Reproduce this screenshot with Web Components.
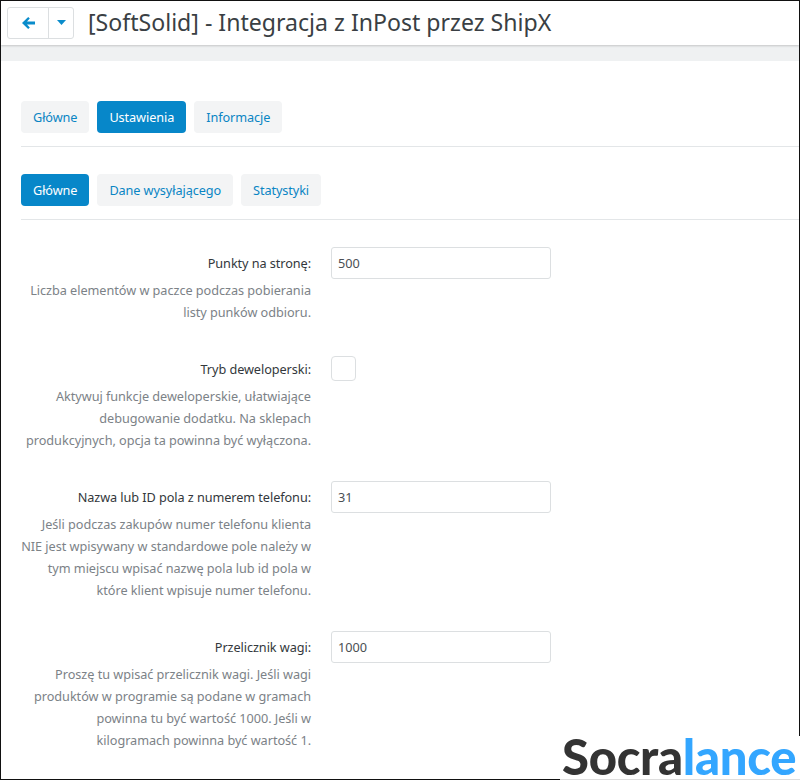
<!DOCTYPE html>
<html lang="en">
    <head>
        <meta charset="UTF-8" />
        <title>Integracja z InPost</title>
        <style>
            html, body {
                margin: 0;
                background: #fff;
            }
            body {
                font-family: 'Noto Sans', 'Open Sans', sans-serif;
                height: 780px;
                overflow: hidden;
                box-sizing: border-box;
                border: 1px solid #111;
            }
        </style>
    </head>
    <body>
        <app-header title-text="[SoftSolid] - Integracja z InPost przez ShipX"></app-header>
        <tab-bar class="first" items="Główne|Ustawienia|Informacje" active="1"></tab-bar>
        <tab-bar class="second" items="Główne|Dane wysyłającego|Statystyki" active="0"></tab-bar>
        <settings-form>
            <form-row label="Punkty na stronę:" value="500">
                Liczba elementów w paczce podczas pobierania<br />listy punków odbioru.
            </form-row>
            <form-row label="Tryb deweloperski:" type="checkbox">
                Aktywuj funkcje deweloperskie, ułatwiające<br />debugowanie dodatku. Na sklepach<br />produkcyjnych, opcja ta powinna być wyłączona.
            </form-row>
            <form-row label="Nazwa lub ID pola z numerem telefonu:" value="31">
                Jeśli podczas zakupów numer telefonu klienta<br />NIE jest wpisywany w standardowe pole należy w<br />tym miejscu wpisać nazwę pola lub id pola w<br />które klient wpisuje numer telefonu.
            </form-row>
            <form-row label="Przelicznik wagi:" value="1000">
                Proszę tu wpisać przelicznik wagi. Jeśli wagi<br />produktów w programie są podane w gramach<br />powinna tu być wartość 1000. Jeśli w<br />kilogramach powinna być wartość 1.
            </form-row>
        </settings-form>
        <brand-mark></brand-mark>

        <template id="header-template">
            <style>
                :host {
                    display: block;
                }
                .bar {
                    display: flex;
                    align-items: center;
                    gap: 14px;
                    height: 44px;
                    padding-left: 6px;
                    box-shadow: 0 1px 2px rgba(0, 0, 0, 0.18);
                    position: relative;
                }
                .btns {
                    display: flex;
                    width: 67px;
                    height: 32px;
                    box-sizing: border-box;
                    border: 1px solid #dcdfe1;
                    border-radius: 3px;
                    margin-top: -1px;
                }
                .btns span {
                    display: flex;
                    align-items: center;
                    justify-content: center;
                }
                .back {
                    width: 40px;
                    border-right: 1px solid #dcdfe1;
                }
                .more {
                    flex: 1;
                }
                h1 {
                    margin: -3px 0 0;
                    font-size: 23.1px;
                    font-weight: 400;
                    color: #3a3f44;
                    white-space: nowrap;
                }
                .band {
                    height: 16px;
                    background: #eff1f2;
                }
            </style>
            <div class="bar">
                <div class="btns">
                    <span class="back">
                        <svg width="13" height="12" viewBox="0 0 13 12">
                            <path d="M6.2 0 7.8 1.6 5 4.4h8v3.2H5l2.8 2.8L6.2 12 0 6z" fill="#0a8ccb" />
                        </svg>
                    </span>
                    <span class="more">
                        <svg width="9" height="5" viewBox="0 0 9 5"><path d="M0 0h9L4.5 5z" fill="#0a8ccb" /></svg>
                    </span>
                </div>
                <h1></h1>
            </div>
            <div class="band"></div>
        </template>

        <template id="tabs-template">
            <style>
                :host {
                    display: flex;
                    gap: 8px;
                    margin-left: 20px;
                    padding-bottom: 13px;
                    border-bottom: 1px solid #e3e6e8;
                }
                a {
                    height: 32px;
                    line-height: 32px;
                    padding: 0 12px;
                    border-radius: 4px;
                    background: #f3f4f5;
                    color: #0a85c4;
                    font-size: 12.7px;
                    letter-spacing: -0.09px;
                    white-space: nowrap;
                }
                a.on {
                    background: #0787c9;
                    color: #fff;
                }
            </style>
        </template>

        <template id="row-template">
            <style>
                :host {
                    display: grid;
                    grid-template-columns: 310px 220px;
                    column-gap: 20px;
                    margin-bottom: 30px;
                }
                .left {
                    text-align: right;
                    font-size: 12.7px;
                    letter-spacing: -0.07px;
                }
                label {
                    display: block;
                    line-height: 18px;
                    padding-top: 7px;
                    color: #33383c;
                    white-space: nowrap;
                }
                .help {
                    margin-top: 7px;
                    line-height: 22px;
                    letter-spacing: -0.04px;
                    color: #7c8287;
                    white-space: nowrap;
                }
                .box {
                    box-sizing: border-box;
                    width: 220px;
                    height: 32px;
                    padding: 0 6px;
                    line-height: 30px;
                    font-size: 12.7px;
                    color: #4a4f54;
                    border: 1px solid #dcdfe1;
                    border-radius: 3px;
                    background: #fff;
                }
                .box.check {
                    width: 25px;
                    height: 25px;
                    border-radius: 4px;
                    margin-top: 3px;
                }
            </style>
            <div class="left">
                <label></label>
                <div class="help"><slot></slot></div>
            </div>
            <div><div class="box"></div></div>
        </template>

        <template id="brand-template">
            <style>
                :host {
                    position: absolute;
                    right: 0;
                    bottom: 0;
                    box-sizing: border-box;
                    width: 240px;
                    height: 44px;
                    padding-left: 2px;
                    background: #fff;
                    border-bottom: 1px solid #ddd;
                    font: 900 49px/41px 'Lato', sans-serif;
                    letter-spacing: -0.3px;
                    color: #333;
                    white-space: nowrap;
                }
                b {
                    font-weight: 900;
                    color: #33a6ff;
                }
            </style>
            Socra<b>lance</b>
        </template>

        <script type="module">
            const fromTemplate = (el, id) => {
                el.attachShadow({ mode: 'open' });
                el.shadowRoot.appendChild(
                    document.getElementById(id).content.cloneNode(true)
                );
            };

            class AppHeader extends HTMLElement {
                constructor() {
                    super();
                    fromTemplate(this, 'header-template');
                    this.shadowRoot.querySelector('h1').textContent =
                        this.getAttribute('title-text');
                }
            }

            class TabBar extends HTMLElement {
                constructor() {
                    super();
                    fromTemplate(this, 'tabs-template');
                    const active = Number(this.getAttribute('active'));
                    this.getAttribute('items')
                        .split('|')
                        .forEach((name, i) => {
                            const tab = document.createElement('a');
                            tab.textContent = name;
                            if (i === active) tab.className = 'on';
                            this.shadowRoot.appendChild(tab);
                        });
                    this.style.marginTop = this.classList.contains('first')
                        ? '40px'
                        : '27px';
                }
            }

            class SettingsForm extends HTMLElement {
                constructor() {
                    super();
                    this.attachShadow({ mode: 'open' });
                    this.shadowRoot.innerHTML = `
                        <style>
                            :host { display: block; padding-top: 27px; }
                        </style>
                        <slot></slot>
                    `;
                }
            }

            class FormRow extends HTMLElement {
                constructor() {
                    super();
                    fromTemplate(this, 'row-template');
                    this.shadowRoot.querySelector('label').textContent =
                        this.getAttribute('label');
                    const box = this.shadowRoot.querySelector('.box');
                    if (this.getAttribute('type') === 'checkbox') {
                        box.classList.add('check');
                    } else {
                        box.textContent = this.getAttribute('value');
                    }
                }
            }

            class BrandMark extends HTMLElement {
                constructor() {
                    super();
                    fromTemplate(this, 'brand-template');
                }
            }

            customElements.define('app-header', AppHeader);
            customElements.define('tab-bar', TabBar);
            customElements.define('settings-form', SettingsForm);
            customElements.define('form-row', FormRow);
            customElements.define('brand-mark', BrandMark);
        </script>
    </body>
</html>
